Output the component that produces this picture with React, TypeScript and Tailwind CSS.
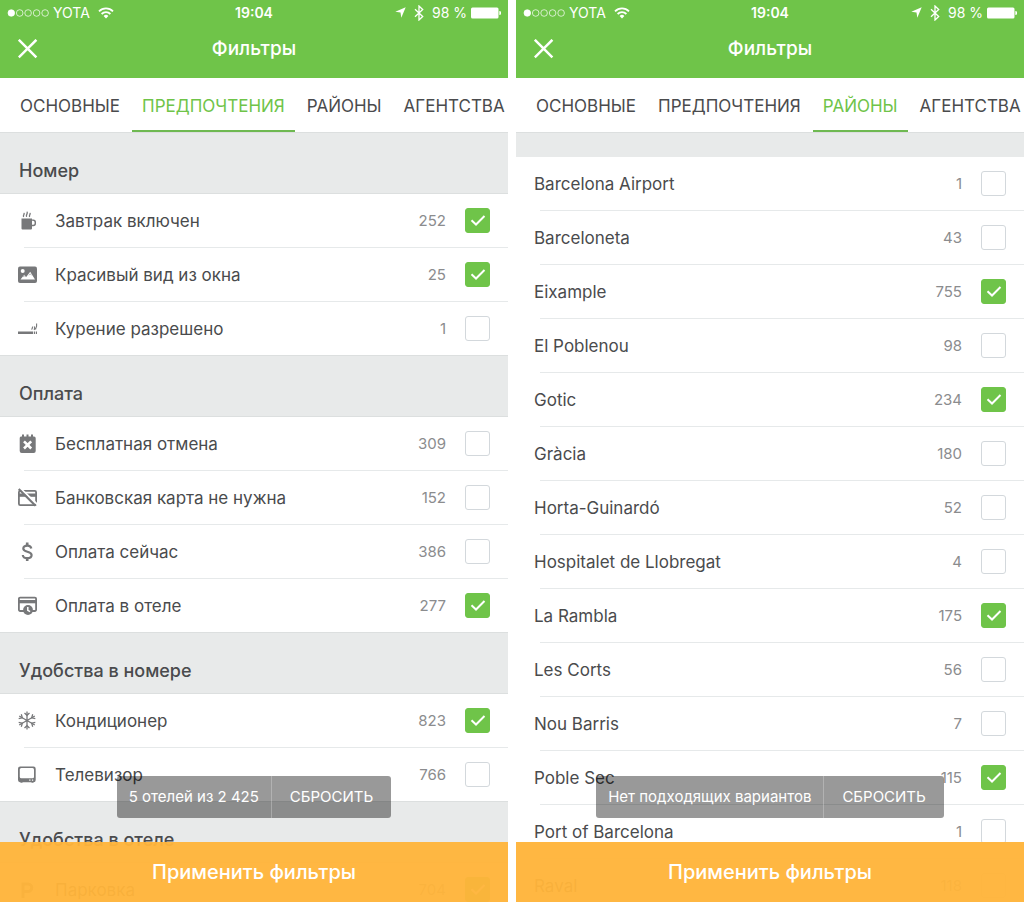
import type { ReactNode } from "react";

type Option = {
  name: string;
  count: number;
  checked?: boolean;
  icon?: ReactNode;
};

const icons = {
  cup: (
    <svg viewBox="0 0 20 20" className="size-5 text-[#77787a]" fill="currentColor" aria-hidden="true">
      <path d="M3.500 7.500h10.500v1h1.300a2.700 2.700 0 0 1 2.700 2.700v1.300a2.700 2.700 0 0 1-2.700 2.700H14v2.300a1 1 0 0 1-1 1H4.500a1 1 0 0 1-1-1zm10.500 2.300v4h1a1.600 1.600 0 0 0 1.600-1.600v-.8a1.600 1.600 0 0 0-1.600-1.600z" />
      <path d="M5.500 5.500c-.5-1.300 1-1.800.6-3.200M8.500 5.300c-.6-1.500 1.200-2.300.7-4.200M11.500 5.500c-.5-1.300 1-1.800.6-3.200" fill="none" stroke="currentColor" strokeWidth="1.300" strokeLinecap="round" />
    </svg>
  ),
  picture: (
    <svg viewBox="0 0 20 20" className="size-5 text-[#77787a]" aria-hidden="true">
      <rect x="0" y="1.500" width="19" height="16.500" rx="2" fill="currentColor" />
      <circle cx="4.700" cy="6" r="2" fill="#fff" />
      <path d="M2.500 14.500 6.200 9.700l2 2.300 4-5.200 4.800 7.700z" fill="#fff" />
      <path d="m5 12 1.200-1.500L7.500 12M11 10.300l1.200-1.500 1.300 1.500" fill="none" stroke="currentColor" strokeWidth="0.500" />
    </svg>
  ),
  smoking: (
    <svg viewBox="0 0 20 20" className="size-5 text-[#77787a]" fill="currentColor" aria-hidden="true">
      <path d="M0 12.500h15v2.500H0zM15.800 12.500h1.200v2.500h-1.200zM17.800 12.500h1.200v2.500h-1.200z" />
      <path d="M13.500 10.500c1.200-.7.400-1.700 1.300-2.900M16 10.800c1-1 .8-2.200.3-3.400M17.800 10.500c-.5-1.500.8-2.400.8-3.500V4.500" fill="none" stroke="currentColor" strokeWidth="1.100" />
    </svg>
  ),
  calendar: (
    <svg viewBox="0 0 20 20" className="size-5 text-[#77787a]" aria-hidden="true">
      <path d="M3 2.500h1V.5h2v2h2.500v-2h2v2H13v-2h2v2h1A1.700 1.700 0 0 1 17.700 4.200V17a2 2 0 0 1-2 2h-12a2 2 0 0 1-2-2V4.200A1.700 1.700 0 0 1 3 2.500z" fill="currentColor" />
      <path d="m6 7.300 7.200 7.200m0-7.200L6 14.500" stroke="#fff" strokeWidth="2.600" />
    </svg>
  ),
  cardOff: (
    <svg viewBox="0 0 20 20" className="size-5 text-[#77787a]" aria-hidden="true">
      <rect x="0.900" y="2.900" width="17.200" height="14.200" rx="1.300" fill="none" stroke="currentColor" strokeWidth="1.800" />
      <path d="M1 5.500h17.500v3.300H1z" fill="currentColor" />
      <path d="M2.500.5 20 17" stroke="#fff" strokeWidth="2" />
      <path d="M.7 1 17.500 17.800" stroke="currentColor" strokeWidth="2.200" />
    </svg>
  ),
  dollar: (
    <svg viewBox="0 0 20 20" className="size-5 text-[#77787a]" fill="none" stroke="currentColor" aria-hidden="true">
      <path d="M9.200.5v3.300M9.200 15.800v3.200" strokeWidth="2.600" />
      <path d="M13.300 6.500C13 4.500 11.500 3.600 9.300 3.600 6.900 3.600 5.300 4.700 5.300 6.600c0 4.300 8.300 2 8.300 6.500 0 2-1.700 3.100-4.200 3.100-2.700 0-4.400-1.100-4.600-3.200" strokeWidth="2.200" />
    </svg>
  ),
  cardClock: (
    <svg viewBox="0 0 20 20" className="size-5 text-[#77787a]" aria-hidden="true">
      <path d="M6 15H2.100a1.200 1.200 0 0 1-1.200-1.200v-11a1.200 1.200 0 0 1 1.200-1.200h14.800a1.200 1.200 0 0 1 1.200 1.200v11a1.200 1.200 0 0 1-1.200 1.200H14" fill="none" stroke="currentColor" strokeWidth="1.800" />
      <path d="M1 4h17.500v3.300H1z" fill="currentColor" />
      <circle cx="10" cy="14" r="4.900" fill="currentColor" />
      <path d="M9.800 11v3.300l2.300 1.300" fill="none" stroke="#fff" strokeWidth="1.500" />
    </svg>
  ),
  snow: (
    <svg viewBox="0 0 20 20" className="size-5 text-[#77787a]" fill="none" stroke="currentColor" strokeWidth="1.300" aria-hidden="true">
      <path d="M9 .5v18M1.200 5l15.600 9M16.800 5 1.200 14" />
      <path d="M6.500 2 9 4.300 11.500 2M6.500 17 9 14.700l2.500 2.300M.7 7.700l3.600-.9-1-3.500M17.300 7.700l-3.600-.9 1-3.500M.7 11.300l3.600.9-1 3.500M17.300 11.300l-3.600.9 1 3.500" />
    </svg>
  ),
  tv: (
    <svg viewBox="0 0 20 20" className="size-5 text-[#77787a]" aria-hidden="true">
      <path d="M2.200 1.500h13.300a2.200 2.200 0 0 1 2.200 2.200v11.300a2.200 2.200 0 0 1-2.200 2.200v.6h-2v-.6h-9v.6h-2v-.6a2.200 2.200 0 0 1-2.500-2.200V3.700a2.200 2.200 0 0 1 2.200-2.200z" fill="currentColor" />
      <rect x="1.800" y="3" width="14.200" height="10.300" rx="1.500" fill="#fff" />
      <path d="M11.200 14.500h1.300v1.300h-1.300zM13.900 14.500h1.300v1.300h-1.300z" fill="#fff" />
    </svg>
  ),
  parking: (
    <svg viewBox="0 0 20 20" className="size-5 text-[#77787a]" fill="none" stroke="currentColor" strokeWidth="3" aria-hidden="true">
      <path d="M5 18V4h5a3.800 3.800 0 0 1 0 7.600H5" />
    </svg>
  ),
};

const groups: { title: string; options: Option[] }[] = [
  {
    title: "Номер",
    options: [
      { name: "Завтрак включен", count: 252, checked: true, icon: icons.cup },
      { name: "Красивый вид из окна", count: 25, checked: true, icon: icons.picture },
      { name: "Курение разрешено", count: 1, icon: icons.smoking },
    ],
  },
  {
    title: "Оплата",
    options: [
      { name: "Бесплатная отмена", count: 309, icon: icons.calendar },
      { name: "Банковская карта не нужна", count: 152, icon: icons.cardOff },
      { name: "Оплата сейчас", count: 386, icon: icons.dollar },
      { name: "Оплата в отеле", count: 277, checked: true, icon: icons.cardClock },
    ],
  },
  {
    title: "Удобства в номере",
    options: [
      { name: "Кондиционер", count: 823, checked: true, icon: icons.snow },
      { name: "Телевизор", count: 766, icon: icons.tv },
    ],
  },
  {
    title: "Удобства в отеле",
    options: [{ name: "Парковка", count: 704, checked: true, icon: icons.parking }],
  },
];

const districts: Option[] = [
  { name: "Barcelona Airport", count: 1 },
  { name: "Barceloneta", count: 43 },
  { name: "Eixample", count: 755, checked: true },
  { name: "El Poblenou", count: 98 },
  { name: "Gotic", count: 234, checked: true },
  { name: "Gràcia", count: 180 },
  { name: "Horta-Guinardó", count: 52 },
  { name: "Hospitalet de Llobregat", count: 4 },
  { name: "La Rambla", count: 175, checked: true },
  { name: "Les Corts", count: 56 },
  { name: "Nou Barris", count: 7 },
  { name: "Poble Sec", count: 115, checked: true },
  { name: "Port of Barcelona", count: 1 },
  { name: "Raval", count: 118 },
];

const tabs = ["ОСНОВНЫЕ", "ПРЕДПОЧТЕНИЯ", "РАЙОНЫ", "АГЕНТСТВА"];

function StatusBar() {
  return (
    <div className="grid h-6 grid-cols-[1fr_auto_1fr] items-center px-[7px] pt-px text-[14px]">
      <div className="flex items-center gap-1">
        <svg viewBox="0 0 42 8" className="h-2 w-[42px]" fill="none" stroke="#fff" strokeWidth="0.700" aria-hidden="true">
          <circle cx="4.300" cy="4" r="3.300" fill="#fff" />
          <circle cx="12.700" cy="4" r="3.300" />
          <circle cx="21.100" cy="4" r="3.300" />
          <circle cx="29.600" cy="4" r="3.300" />
          <circle cx="38.100" cy="4" r="3.300" />
        </svg>
        <span>YOTA</span>
        <svg viewBox="0 0 16 12" className="ml-1 h-3 w-4" fill="none" stroke="#fff" strokeWidth="1.800" aria-hidden="true">
          <path d="M1 4.300a10 10 0 0 1 14 0M3.600 7a6.300 6.300 0 0 1 8.800 0" />
          <path d="M8 11.500 5.600 9a3.400 3.400 0 0 1 4.800 0z" fill="#fff" stroke="none" />
        </svg>
      </div>
      <span className="px-1 font-semibold">19:04</span>
      <div className="flex items-center justify-end gap-1">
        <svg viewBox="0 0 11 11" className="size-[11px]" fill="#fff" aria-hidden="true">
          <path d="M10.700.3 6.300 10.700 5.500 5.500.3 4.700z" />
        </svg>
        <svg viewBox="0 0 10 16" className="mx-1 h-4 w-[10px]" fill="none" stroke="#fff" strokeWidth="1.300" aria-hidden="true">
          <path d="m1 4.300 7.700 7.200L5 15V1l3.700 3.500L1 11.700" />
        </svg>
        <span>98 %</span>
        <svg viewBox="0 0 30 12" className="h-3 w-[30px]" fill="#fff" aria-hidden="true">
          <rect x="0" y="0.500" width="27.500" height="11" rx="1.500" />
          <path d="M28.300 4a2 2 0 0 1 0 4z" />
        </svg>
      </div>
    </div>
  );
}

function Row({ option, last }: { option: Option; last?: boolean }) {
  return (
    <li>
      <label className="flex h-[53px] items-center px-[18px]">
        {option.icon && <span className="mr-[17px]">{option.icon}</span>}
        <span className="flex-1 pt-[2px] text-[17px] text-[#4a4b4d]">{option.name}</span>
        <span className="mr-[19px] pt-[2px] text-[15px] text-[#8b8c8e]">{option.count}</span>
        <span className="grid place-items-center">
          <input
            type="checkbox"
            defaultChecked={option.checked}
            className="peer col-start-1 row-start-1 size-[25px] appearance-none rounded-[3px] border border-[#d3d8dc] bg-white checked:border-[#6fc449] checked:bg-[#6fc449]"
          />
          <svg viewBox="0 0 16 12" className="pointer-events-none invisible col-start-1 row-start-1 h-3 w-4 peer-checked:visible" fill="none" stroke="#fff" strokeWidth="2" aria-hidden="true">
            <path d="m1.500 5.300 4.500 4.200L14.500 1" />
          </svg>
        </span>
      </label>
      <div className={last ? "h-px bg-[#dcdfdf]" : "ml-6 h-px bg-[#e6e9ea]"} />
    </li>
  );
}

function Screen({ active, message, children }: { active: string; message: string; children: ReactNode }) {
  return (
    <section className="relative flex min-w-0 flex-col overflow-hidden bg-white">
      <header className="bg-[#6fc449] text-white">
        <StatusBar />
        <div className="grid h-[54px] grid-cols-[1fr_auto_1fr] items-center px-[18px] pb-1">
          <button type="button" aria-label="Закрыть" className="justify-self-start">
            <svg viewBox="0 0 20 20" className="size-5" fill="none" stroke="#fff" strokeWidth="2.500" aria-hidden="true">
              <path d="m.8.800 17.600 17.600M18.400.8.800 18.400" />
            </svg>
          </button>
          <h1 className="text-[19px] font-medium">Фильтры</h1>
        </div>
      </header>

      <nav className="flex h-[55px] shrink-0 gap-[2px] border-b border-[#dcdfdf] pl-[10px]">
        {tabs.map((tab) => (
          <button
            key={tab}
            type="button"
            aria-pressed={tab === active}
            className={
              tab === active
                ? "border-b-2 border-[#6fb952] px-[10px] pt-[5px] text-[17px] text-[#6fc449]"
                : "border-b-2 border-transparent px-[10px] pt-[5px] text-[17px] text-[#4a4b4d]"
            }
          >
            {tab}
          </button>
        ))}
      </nav>

      <main className="min-h-0 flex-1 overflow-hidden">{children}</main>

      {/* Floating counter above the apply bar */}
      <div className="absolute inset-x-0 bottom-[84px] flex justify-center">
        <div className="flex h-[42px] items-stretch overflow-hidden rounded-[3px] bg-black/40 text-[15px] text-white">
          <output className="flex items-center px-3">{message}</output>
          <button type="button" className="border-l border-white/25 px-[18px]">
            СБРОСИТЬ
          </button>
        </div>
      </div>

      <button type="submit" className="absolute inset-x-0 bottom-0 h-[60px] bg-[#ffb43a]/96 text-[20px] font-medium text-white">
        Применить фильтры
      </button>
    </section>
  );
}

export default function App() {
  return (
    <div className="grid h-screen grid-cols-2 gap-2 overflow-hidden bg-white font-['Inter',sans-serif]">
      <Screen active="ПРЕДПОЧТЕНИЯ" message="5 отелей из 2 425">
        {groups.map((group) => (
          <div key={group.title}>
            <h2 className="flex h-[61px] items-center border-b border-[#dcdfdf] bg-[#e8eaea] px-[19px] pt-[14px] text-[18px] font-medium text-[#4a4b4d]">
              {group.title}
            </h2>
            <ul>
              {group.options.map((option, i) => (
                <Row key={option.name} option={option} last={i === group.options.length - 1} />
              ))}
            </ul>
          </div>
        ))}
      </Screen>

      <Screen active="РАЙОНЫ" message="Нет подходящих вариантов">
        <div className="h-6 bg-[#e8eaea]" />
        <ul>
          {districts.map((option) => (
            <Row key={option.name} option={option} />
          ))}
        </ul>
      </Screen>
    </div>
  );
}
